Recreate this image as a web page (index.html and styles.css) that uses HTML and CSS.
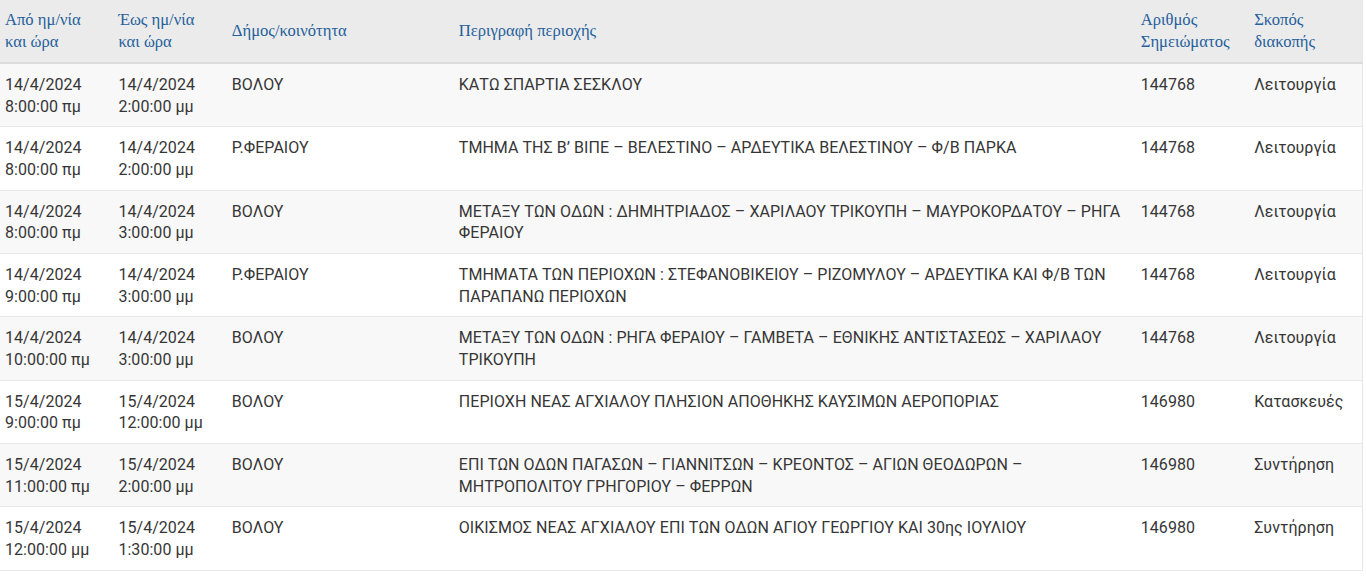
FILE: index.html
```html
<!DOCTYPE html>
<html lang="el">
<head>
<meta charset="utf-8">
<title>Διακοπές ρεύματος</title>
<link rel="stylesheet" href="styles.css">
</head>
<body>
<div class="wrap">
<table class="outages">
  <colgroup>
    <col class="c-narrow"><col class="c-narrow"><col class="c-mid"><col class="c-wide"><col class="c-narrow"><col class="c-narrow">
  </colgroup>
  <thead>
    <tr>
      <th>Από ημ/νία<br>και ώρα</th>
      <th>Έως ημ/νία<br>και ώρα</th>
      <th>Δήμος/κοινότητα</th>
      <th>Περιγραφή περιοχής</th>
      <th>Αριθμός<br>Σημειώματος</th>
      <th>Σκοπός<br>διακοπής</th>
    </tr>
  </thead>
  <tbody>
    <tr>
      <td>14/4/2024<br>8:00:00 πμ</td>
      <td>14/4/2024<br>2:00:00 μμ</td>
      <td>ΒΟΛΟΥ</td>
      <td>ΚΑΤΩ ΣΠΑΡΤΙΑ ΣΕΣΚΛΟΥ</td>
      <td>144768</td>
      <td>Λειτουργία</td>
    </tr>
    <tr>
      <td>14/4/2024<br>8:00:00 πμ</td>
      <td>14/4/2024<br>2:00:00 μμ</td>
      <td>Ρ.ΦΕΡΑΙΟΥ</td>
      <td>ΤΜΗΜΑ ΤΗΣ Β’ ΒΙΠΕ – ΒΕΛΕΣΤΙΝΟ – ΑΡΔΕΥΤΙΚΑ ΒΕΛΕΣΤΙΝΟΥ – Φ/Β ΠΑΡΚΑ</td>
      <td>144768</td>
      <td>Λειτουργία</td>
    </tr>
    <tr>
      <td>14/4/2024<br>8:00:00 πμ</td>
      <td>14/4/2024<br>3:00:00 μμ</td>
      <td>ΒΟΛΟΥ</td>
      <td>ΜΕΤΑΞΥ ΤΩΝ ΟΔΩΝ : ΔΗΜΗΤΡΙΑΔΟΣ – ΧΑΡΙΛΑΟΥ ΤΡΙΚΟΥΠΗ – ΜΑΥΡΟΚΟΡΔΑΤΟΥ – ΡΗΓΑ ΦΕΡΑΙΟΥ</td>
      <td>144768</td>
      <td>Λειτουργία</td>
    </tr>
    <tr>
      <td>14/4/2024<br>9:00:00 πμ</td>
      <td>14/4/2024<br>3:00:00 μμ</td>
      <td>Ρ.ΦΕΡΑΙΟΥ</td>
      <td>ΤΜΗΜΑΤΑ ΤΩΝ ΠΕΡΙΟΧΩΝ : ΣΤΕΦΑΝΟΒΙΚΕΙΟΥ – ΡΙΖΟΜΥΛΟΥ – ΑΡΔΕΥΤΙΚΑ ΚΑΙ Φ/Β ΤΩΝ ΠΑΡΑΠΑΝΩ ΠΕΡΙΟΧΩΝ</td>
      <td>144768</td>
      <td>Λειτουργία</td>
    </tr>
    <tr>
      <td>14/4/2024<br>10:00:00 πμ</td>
      <td>14/4/2024<br>3:00:00 μμ</td>
      <td>ΒΟΛΟΥ</td>
      <td>ΜΕΤΑΞΥ ΤΩΝ ΟΔΩΝ : ΡΗΓΑ ΦΕΡΑΙΟΥ – ΓΑΜΒΕΤΑ – ΕΘΝΙΚΗΣ ΑΝΤΙΣΤΑΣΕΩΣ – ΧΑΡΙΛΑΟΥ ΤΡΙΚΟΥΠΗ</td>
      <td>144768</td>
      <td>Λειτουργία</td>
    </tr>
    <tr>
      <td>15/4/2024<br>9:00:00 πμ</td>
      <td>15/4/2024<br>12:00:00 μμ</td>
      <td>ΒΟΛΟΥ</td>
      <td>ΠΕΡΙΟΧΗ ΝΕΑΣ ΑΓΧΙΑΛΟΥ ΠΛΗΣΙΟΝ ΑΠΟΘΗΚΗΣ ΚΑΥΣΙΜΩΝ ΑΕΡΟΠΟΡΙΑΣ</td>
      <td>146980</td>
      <td>Κατασκευές</td>
    </tr>
    <tr>
      <td>15/4/2024<br>11:00:00 πμ</td>
      <td>15/4/2024<br>2:00:00 μμ</td>
      <td>ΒΟΛΟΥ</td>
      <td>ΕΠΙ ΤΩΝ ΟΔΩΝ ΠΑΓΑΣΩΝ – ΓΙΑΝΝΙΤΣΩΝ – ΚΡΕΟΝΤΟΣ – ΑΓΙΩΝ ΘΕΟΔΩΡΩΝ – ΜΗΤΡΟΠΟΛΙΤΟΥ ΓΡΗΓΟΡΙΟΥ – ΦΕΡΡΩΝ</td>
      <td>146980</td>
      <td>Συντήρηση</td>
    </tr>
    <tr>
      <td>15/4/2024<br>12:00:00 μμ</td>
      <td>15/4/2024<br>1:30:00 μμ</td>
      <td>ΒΟΛΟΥ</td>
      <td>ΟΙΚΙΣΜΟΣ ΝΕΑΣ ΑΓΧΙΑΛΟΥ ΕΠΙ ΤΩΝ ΟΔΩΝ ΑΓΙΟΥ ΓΕΩΡΓΙΟΥ ΚΑΙ 30ης ΙΟΥΛΙΟΥ</td>
      <td>146980</td>
      <td>Συντήρηση</td>
    </tr>
  </tbody>
</table>
</div>
</body>
</html>
```
FILE: styles.css
```css
html, body {
  margin: 0;
  padding: 0;
  background: #ffffff;
}
.wrap {
  width: 1361px;
}
.outages {
  width: 1361px;
  border-collapse: collapse;
  table-layout: fixed;
  font-family: Roboto, "Noto Sans", sans-serif;
  font-size: 16px;
  letter-spacing: 0.05px;
  color: #363636;
  border-right: 1px solid #e6e6e6;
}
.c-narrow { width: 113.4px; }
.c-mid { width: 227px; }
.c-wide { width: 682px; }
.outages th {
  font-family: "Liberation Serif", "DejaVu Serif", serif;
  font-weight: normal;
  font-size: 16.6px;
  letter-spacing: 0;
  color: #255f9c;
  text-align: left;
  vertical-align: middle;
  background: #ebebeb;
  line-height: 22px;
  padding: 9px 5px 9px 5px;
  border-bottom: 2px solid #dcdcdc;
}
.outages td {
  vertical-align: top;
  line-height: 21.67px;
  padding: 10px 5px 9px 5px;
  border-bottom: 1px solid #e8e8e8;
}
.outages tbody tr:nth-child(odd) td {
  background: #f8f8f8;
}
.outages tbody tr:nth-child(even) td {
  background: #ffffff;
}
```
